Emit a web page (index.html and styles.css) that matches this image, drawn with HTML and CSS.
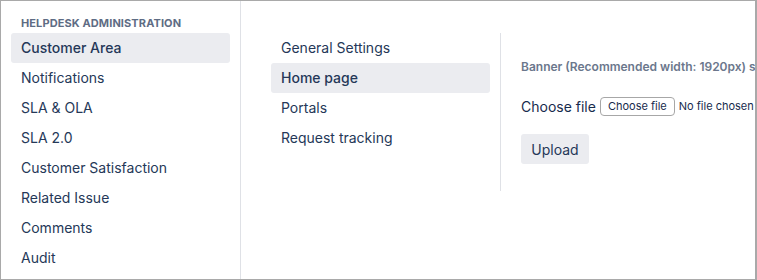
FILE: index.html
```html
<!DOCTYPE html>
<html lang="en">

<head>
    <meta charset="UTF-8">
    <meta name="viewport" content="width=device-width, initial-scale=1.0">
    <title>Helpdesk administration</title>
    <link rel="stylesheet" href="styles.css">
</head>

<body>
    <div class="frame">
        <div class="sidebar">
            <div class="sidebar-title">Helpdesk Administration</div>
            <a href="javascript:;" class="nav-item active">Customer Area</a>
            <a href="javascript:;" class="nav-item">Notifications</a>
            <a href="javascript:;" class="nav-item">SLA &amp; OLA</a>
            <a href="javascript:;" class="nav-item">SLA 2.0</a>
            <a href="javascript:;" class="nav-item">Customer Satisfaction</a>
            <a href="javascript:;" class="nav-item">Related Issue</a>
            <a href="javascript:;" class="nav-item">Comments</a>
            <a href="javascript:;" class="nav-item">Audit</a>
        </div>
        <div class="main">
            <div class="subnav">
                <a href="javascript:;" class="nav-item">General Settings</a>
                <a href="javascript:;" class="nav-item active">Home page</a>
                <a href="javascript:;" class="nav-item">Portals</a>
                <a href="javascript:;" class="nav-item">Request tracking</a>
            </div>
            <div class="content">
                <div class="field-label">Banner (Recommended width: 1920px) s</div>
                <div class="file-row">
                    <label for="banner">Choose file</label>
                    <label class="file-btn" for="banner">Choose file</label>
                    <span class="file-name">No file chosen</span>
                    <input type="file" id="banner" class="file-input">
                </div>
                <button class="btn">Upload</button>
            </div>
        </div>
    </div>
</body>

</html>
```

FILE: styles.css
```css
* {
    margin: 0;
    padding: 0;
    box-sizing: border-box;
}

body {
    font-family: Inter, "Liberation Sans", sans-serif;
    color: #253858;
    background-color: #fff;
}

a {
    text-decoration: none;
    color: #253858;
}

.frame {
    display: flex;
    width: 757px;
    height: 280px;
    border: 1px solid #a9a9a9;
    border-right-width: 2px;
    overflow: hidden;
}

.sidebar {
    flex: none;
    width: 240px;
    padding: 14px 10px 0 10px;
    border-right: 1px solid #dfe1e6;
}

.sidebar-title {
    height: 18px;
    line-height: 16px;
    padding-left: 10px;
    font-size: 11px;
    font-weight: 700;
    color: #5e6c84;
    text-transform: uppercase;
    letter-spacing: 0.1px;
}

.nav-item {
    display: block;
    height: 30px;
    line-height: 30px;
    padding: 0 10px;
    font-size: 14px;
    border-radius: 3px;
}

.nav-item.active {
    background-color: #ebecf0;
    font-weight: 500;
}

.main {
    flex: 1;
    display: flex;
    align-items: flex-start;
    padding: 32px 0 0 30px;
    min-width: 0;
}

.subnav {
    flex: none;
    width: 219px;
    margin-right: 10px;
}

.content {
    min-height: 158px;
    padding: 26px 0 0 20px;
    border-left: 1px solid #dfe1e6;
    white-space: nowrap;
}

.field-label {
    line-height: 16px;
    font-size: 12px;
    font-weight: 600;
    color: #6b778c;
}

.file-row {
    display: flex;
    align-items: center;
    height: 24px;
    margin-top: 19px;
    font-size: 14px;
    color: #172b4d;
}

.file-btn {
    height: 19px;
    line-height: 17px;
    margin-left: 4px;
    padding: 0 7px;
    font-size: 11px;
    color: #172b4d;
    background-color: #fff;
    border: 1px solid #a7a7a7;
    border-radius: 4px;
}

.file-name {
    margin-left: 4px;
    font-size: 11px;
}

.file-input {
    display: none;
}

.btn {
    display: block;
    width: 68px;
    height: 30px;
    margin-top: 16px;
    font-family: inherit;
    font-size: 14px;
    color: #253858;
    background-color: #ebecf0;
    border: 0;
    border-radius: 3px;
}
```
